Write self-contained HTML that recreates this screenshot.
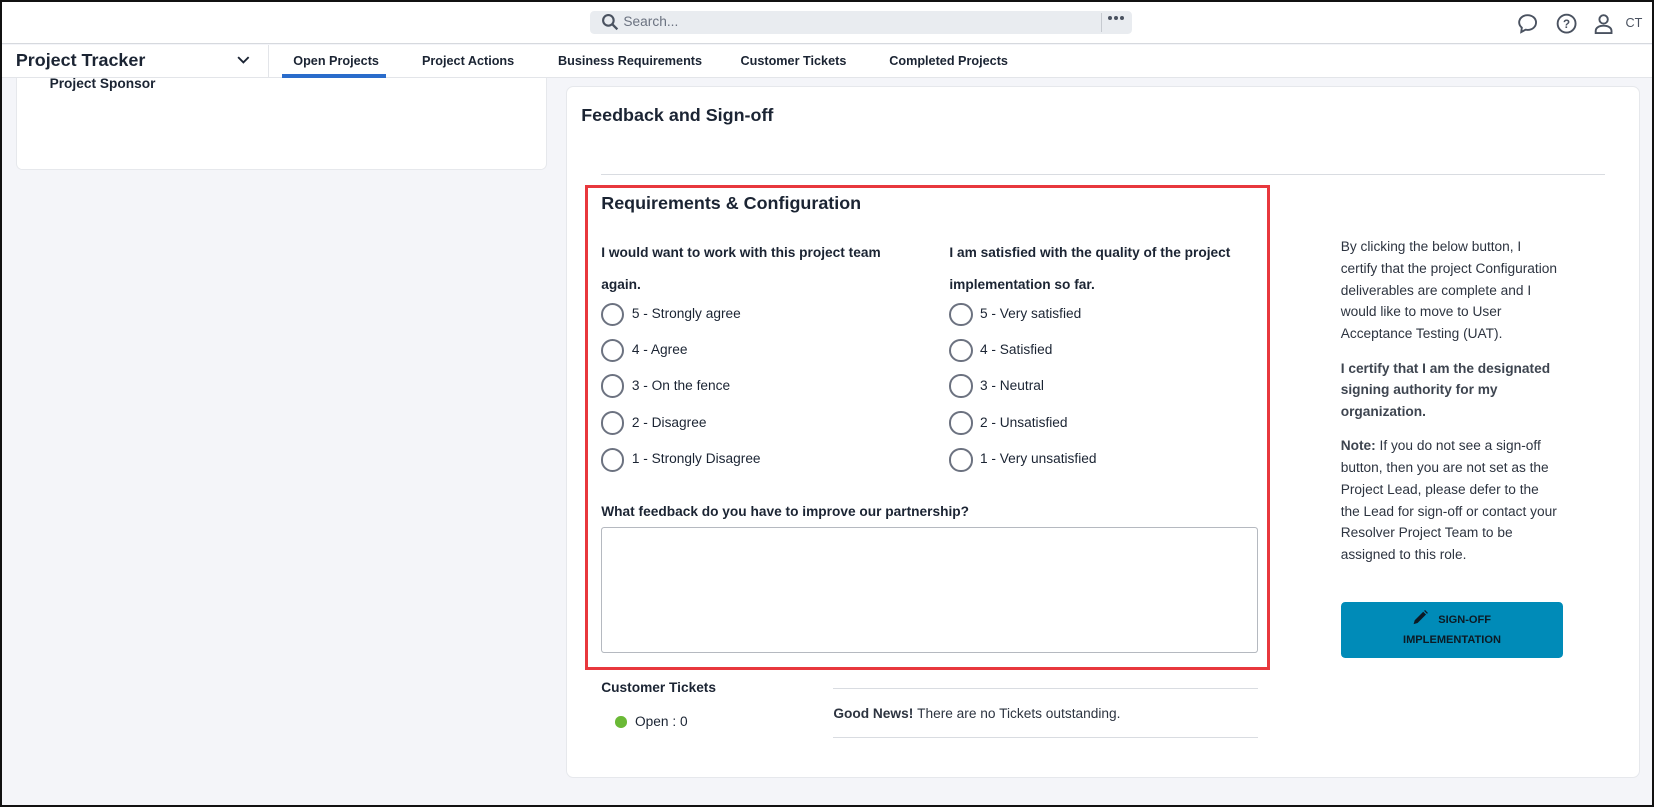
<!DOCTYPE html>
<html><head><meta charset="utf-8"><style>
*{box-sizing:border-box;margin:0;padding:0}
html,body{width:1654px;height:807px;overflow:hidden;background:#000}
#w{position:absolute;left:0;top:0;width:1568px;height:765px;zoom:1.05485;background:#f4f5f9;font-family:"Liberation Sans",sans-serif;color:#1b2433;overflow:hidden}
.a{position:absolute}
.b{font-weight:bold}
.t{font-size:12px}
.r{position:absolute;width:22px;height:22px;border:2px solid #6c7280;border-radius:50%;background:#fff}
.rl{position:absolute;font-size:13px;color:#1b2433}
</style></head><body><div id="w">
<div class="a" style="left:0;top:0;width:1568px;height:42px;background:#fff;border-bottom:1px solid #d6d9de"></div>
<div class="a" style="left:559px;top:10px;width:514px;height:22px;background:#e9ecf0;border-radius:4px"></div>
<svg class="a" style="left:570px;top:12px" width="17" height="17" viewBox="0 0 17 17"><circle cx="7" cy="7" r="5" fill="none" stroke="#4a5260" stroke-width="2"/><path d="M11 11l4.5 4.5" stroke="#4a5260" stroke-width="2.2"/></svg>
<div class="a" style="left:591px;top:13px;font-size:13px;color:#6b7280">Search...</div>
<div class="a" style="left:1044px;top:12px;width:1px;height:18px;background:#c6cad0"></div>
<div class="a" style="left:1050px;top:15px;width:20px;height:6px">
<span class="a" style="left:0;top:0;width:4px;height:4px;border-radius:50%;background:#4a5260"></span>
<span class="a" style="left:6px;top:0;width:4px;height:4px;border-radius:50%;background:#4a5260"></span>
<span class="a" style="left:12px;top:0;width:4px;height:4px;border-radius:50%;background:#4a5260"></span></div>
<svg class="a" style="left:1437px;top:11px" width="22" height="22" viewBox="0 0 22 22"><path d="M11 3c-4.5 0-8 3-8 7 0 2 1 3.6 2.5 4.8L5 19l4-2.2c.6.1 1.3.2 2 .2 4.5 0 8-3 8-7s-3.5-7-8-7z" fill="none" stroke="#4a5260" stroke-width="1.8"/></svg>
<svg class="a" style="left:1474px;top:11px" width="22" height="22" viewBox="0 0 22 22"><circle cx="11" cy="11" r="8.5" fill="none" stroke="#4a5260" stroke-width="1.8"/><text x="11" y="15" font-size="11" font-family="Liberation Sans" text-anchor="middle" fill="#4a5260" font-weight="bold">?</text></svg>
<svg class="a" style="left:1509px;top:11px" width="22" height="22" viewBox="0 0 22 22"><circle cx="11" cy="7" r="4" fill="none" stroke="#4a5260" stroke-width="1.8"/><path d="M3.5 20v-2c0-3 3-5 7.5-5s7.5 2 7.5 5v2z" fill="none" stroke="#4a5260" stroke-width="1.8"/></svg>
<div class="a" style="left:1541px;top:15px;font-size:12px;color:#4a5260">CT</div>
<div class="a" style="left:0;top:43px;width:1568px;height:31px;background:#fff;border-bottom:1px solid #e3e5e9"></div>
<div class="a b" style="left:15px;top:47px;font-size:17px">Project Tracker</div>
<svg class="a" style="left:224px;top:52px" width="14" height="10" viewBox="0 0 14 10"><path d="M2 2l5 5 5-5" fill="none" stroke="#1b2433" stroke-width="1.8"/></svg>
<div class="a" style="left:254px;top:43px;width:1px;height:30px;background:#e3e5e9"></div>
<div class="a b t" style="left:278px;top:51px">Open Projects</div>
<div class="a" style="left:267px;top:70px;width:99px;height:4px;background:#2a6ccb"></div>
<div class="a b t" style="left:400px;top:51px">Project Actions</div>
<div class="a b t" style="left:529px;top:51px">Business Requirements</div>
<div class="a b t" style="left:702px;top:51px">Customer Tickets</div>
<div class="a b t" style="left:843px;top:51px">Completed Projects</div>
<div class="a" style="left:15px;top:74px;width:504px;height:87px;background:#fff;border-radius:0 0 6px 6px;border:1px solid #e6e8ec;border-top:none"></div>
<div class="a b" style="left:47px;top:72px;font-size:13px">Project Sponsor</div>
<div class="a" style="left:537px;top:82px;width:1018px;height:656px;background:#fff;border-radius:7px;border:1px solid #e6e8ec"></div>
<div class="a b" style="left:551px;top:100px;font-size:17px">Feedback and Sign-off</div>
<div class="a" style="left:570px;top:165px;width:952px;height:1px;background:#d9dce1"></div>
<div class="a" style="left:555px;top:175px;width:649px;height:460px;border:3px solid #e8383d"></div>
<div class="a b" style="left:570px;top:183px;font-size:17px">Requirements &amp; Configuration</div>
<div class="a b" style="left:570px;top:225px;font-size:13px;line-height:30px;width:300px">I would want to work with this project team again.</div>
<div class="a b" style="left:900px;top:225px;font-size:13px;line-height:30px;width:300px">I am satisfied with the quality of the project implementation so far.</div>
<div class="r" style="left:570px;top:287px"></div><div class="rl" style="left:599px;top:290px">5 - Strongly agree</div>
<div class="r" style="left:570px;top:321px"></div><div class="rl" style="left:599px;top:324px">4 - Agree</div>
<div class="r" style="left:570px;top:355px"></div><div class="rl" style="left:599px;top:358px">3 - On the fence</div>
<div class="r" style="left:570px;top:390px"></div><div class="rl" style="left:599px;top:393px">2 - Disagree</div>
<div class="r" style="left:570px;top:425px"></div><div class="rl" style="left:599px;top:428px">1 - Strongly Disagree</div>
<div class="r" style="left:900px;top:287px"></div><div class="rl" style="left:929px;top:290px">5 - Very satisfied</div>
<div class="r" style="left:900px;top:321px"></div><div class="rl" style="left:929px;top:324px">4 - Satisfied</div>
<div class="r" style="left:900px;top:355px"></div><div class="rl" style="left:929px;top:358px">3 - Neutral</div>
<div class="r" style="left:900px;top:390px"></div><div class="rl" style="left:929px;top:393px">2 - Unsatisfied</div>
<div class="r" style="left:900px;top:425px"></div><div class="rl" style="left:929px;top:428px">1 - Very unsatisfied</div>
<div class="a b" style="left:570px;top:478px;font-size:13px">What feedback do you have to improve our partnership?</div>
<div class="a" style="left:570px;top:500px;width:623px;height:119px;border:1px solid #b5b9c0;border-radius:3px"></div>
<div class="a" style="left:1271px;top:224px;width:208px;font-size:13px;line-height:20.6px;color:#2d3440">
<p style="margin-bottom:12px">By clicking the below button, I certify that the project Configuration deliverables are complete and I would like to move to User Acceptance Testing (UAT).</p>
<p class="b" style="margin-bottom:12px;color:#3e4550">I certify that I am the designated signing authority for my organization.</p>
<p><b style="color:#3e4550">Note:</b> If you do not see a sign-off button, then you are not set as the Project Lead, please defer to the the Lead for sign-off or contact your Resolver Project Team to be assigned to this role.</p></div>
<div class="a" style="left:1271px;top:571px;width:211px;height:53px;background:#008bb8;border-radius:4px;text-align:center;font-size:10.5px;font-weight:bold;color:#0c1a24;line-height:19px;padding-top:7px">
<svg width="14" height="14" viewBox="0 0 12 12" style="vertical-align:-2px;margin-right:10px"><path d="M0.5 11.5l.9-3.2L8.3 1.4l2.3 2.3-6.9 6.9z" fill="#0c1a24"/><path d="M9 .7l.8-.7 2.3 2.3-.7.8z" fill="#0c1a24"/></svg>SIGN-OFF<br>IMPLEMENTATION</div>
<div class="a b" style="left:570px;top:645px;font-size:13px">Customer Tickets</div>
<div class="a" style="left:583px;top:679px;width:11px;height:11px;border-radius:50%;background:#6ab936"></div>
<div class="a" style="left:602px;top:677px;font-size:13px">Open : 0</div>
<div class="a" style="left:790px;top:652px;width:403px;height:1px;background:#d9dce1"></div>
<div class="a b" style="left:790px;top:669px;font-size:13px;color:#2d3440">Good News! <span style="font-weight:normal">There are no Tickets outstanding.</span></div>
<div class="a" style="left:790px;top:699px;width:403px;height:1px;background:#d9dce1"></div>
<div class="a" style="left:0;top:0;width:1568px;height:765px;border:2px solid #111;pointer-events:none"></div>
</div></body></html>
